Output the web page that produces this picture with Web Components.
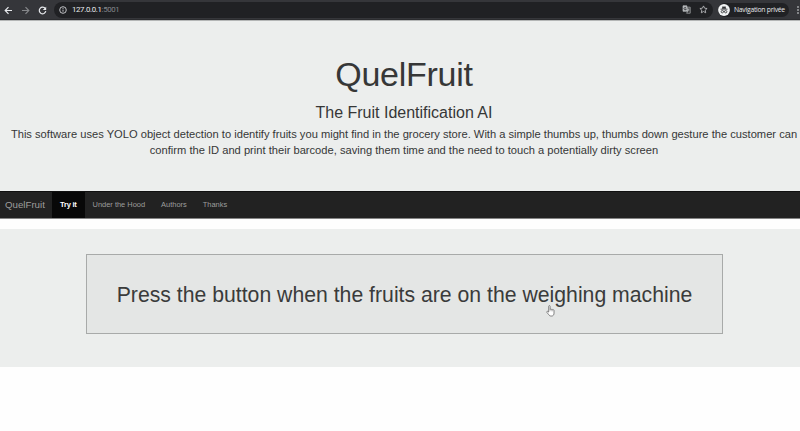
<!DOCTYPE html>
<html lang="en">
<head>
<meta charset="utf-8">
<title>QuelFruit</title>
<style>
html,body{margin:0;height:100%;overflow:hidden;background:#fefefe}
body{font-family:"Liberation Sans",Arial,sans-serif;color:#363737}
</style>
</head>
<body>
<quel-app></quel-app>
<script>
class Base extends HTMLElement{
  constructor(){super();this.attachShadow({mode:'open'}).innerHTML=this.render();}
}
customElements.define('browser-bar',class extends Base{render(){return `
<style>
:host{display:flex;align-items:center;height:20px;box-sizing:border-box;background:#35363a;border-bottom:1px solid #2c2d30;color:#e8eaed;overflow:hidden;font-size:8.3px;line-height:10px}
svg{display:block;flex:none;fill:none;stroke:currentColor}
.nav{display:flex;align-items:center;gap:8px;padding:1px 0 0 4px;width:50px;box-sizing:border-box;flex:none}
.fwd{color:#85878a}
.url{display:flex;align-items:center;flex:1;height:16px;border-radius:8px;background:#202124;margin-left:4px;padding:0 5px;box-sizing:border-box;margin-right:5px}
.addr{margin-left:5px;flex:1;font-family:Roboto,sans-serif;font-size:7.8px;letter-spacing:-.32px;white-space:nowrap}
.port{color:#85888c}
.icons{display:flex;gap:8px;align-items:center;color:#b5b7ba}
.private{display:flex;align-items:center;width:71px;height:14px;border-radius:7px;background:#202124;flex:none;font-family:"Open Sans","Noto Sans",sans-serif;font-size:6.8px;letter-spacing:-.26px;white-space:nowrap}
.private svg{margin-right:4px}
.more{margin-left:7px}
</style>
<div class="nav">
<svg width="9" height="9" viewBox="0 0 9 9" stroke-width="1.2"><path d="M8 4.5H1.3M4.5 1.2 1.2 4.5 4.5 7.8"/></svg>
<svg class="fwd" width="9" height="9" viewBox="0 0 9 9" stroke-width="1.2"><path d="M1 4.5h6.7M4.5 1.2l3.3 3.3-3.3 3.3"/></svg>
<svg width="9" height="9" viewBox="0 0 9 9" stroke-width="1.2"><path d="M7.3 2.6A3.3 3.3 0 1 0 7.8 5.2"/><path d="M8.2.7v3.4H4.8z" fill="currentColor" stroke="none"/></svg>
</div>
<div class="url">
<svg width="8" height="8" viewBox="0 0 8 8" stroke-width=".8"><circle cx="4" cy="4" r="3.3"/><path d="M4 3.6v2.1M4 2.1v.9"/></svg>
<span class="addr">127.0.0.1<span class="port">:5001</span></span>
<span class="icons">
<svg width="9" height="9" viewBox="0 0 9 9" stroke-width=".7"><path d="M1 .8h3.8L6 6.3H1z" fill="currentColor"/><path d="M5.3 2.2h2.9v6H4.5L6 6.3M5.7 4.1h2M6.8 3.5v.6c0 .9-.5 1.4-1.2 1.8M6.1 4.5l1.3 1.7"/><path d="M4.1 2.9A1.2 1.2 0 1 0 4.3 4H3.2" stroke="#202124"/></svg>
<svg width="9" height="9" viewBox="0 0 9 9" stroke-width=".9"><path d="m4.5.9 1.1 2.3 2.5.3-1.9 1.7.5 2.6-2.2-1.3-2.2 1.3.5-2.6L.9 3.5l2.5-.3z"/></svg>
</span>
</div>
<div class="private">
<svg width="12" height="12" viewBox="0 0 12 12"><circle cx="6" cy="6" r="5.9" fill="#f1f3f4" stroke="none"/><path d="m3.8 4.7.8-2.4 1.4.4 1.4-.4.8 2.4z" fill="#303134" stroke="none"/><path d="M2.5 5.2h7" stroke="#303134" stroke-width=".8"/><g stroke="#303134" stroke-width=".8"><circle cx="4.3" cy="7.7" r="1.2"/><circle cx="7.7" cy="7.7" r="1.2"/><path d="M5.4 7.3h1.2"/></g></svg>
<span>Navigation privée</span>
</div>
<svg class="more" width="4" height="10" viewBox="0 0 4 10"><g fill="currentColor" stroke="none"><circle cx="2" cy="2" r=".8"/><circle cx="2" cy="5" r=".8"/><circle cx="2" cy="8" r=".8"/></g></svg>
`}});
customElements.define('intro-banner',class extends Base{render(){return `
<style>
:host{display:block;height:171px;box-sizing:border-box;background:#eceeed;border-top:1px solid #b4b6b6;padding:34px 0 0 8px;text-align:center;white-space:nowrap}
h1,h3,p{margin:0;font-weight:400}
h1{font-size:34px;line-height:38px;letter-spacing:-.25px}
h3{font-size:16px;line-height:18px;margin-top:11px}
p{font-size:11.15px;line-height:16px;margin-top:4px}
</style>
<h1>QuelFruit</h1>
<h3>The Fruit Identification AI</h3>
<p>This software uses YOLO object detection to identify fruits you might find in the grocery store. With a simple thumbs up, thumbs down gesture the customer can<br>confirm the ID and print their barcode, saving them time and the need to touch a potentially dirty screen</p>
`}});
customElements.define('nav-item',class extends Base{render(){return `
<style>
:host{display:flex;align-items:center;justify-content:center;padding:0 8px 1px;color:#9d9d9d;font-size:7.45px}
:host([active]){background:#080808;color:#fff;font-weight:700;letter-spacing:-.2px}
</style><slot></slot>`}});
customElements.define('site-nav',class extends Base{render(){return `
<style>
:host{display:flex;height:28px;box-sizing:border-box;background:#222;border-top:1px solid #101010;border-bottom:1px solid #858585;white-space:nowrap}
.brand{width:52px;box-sizing:border-box;padding-left:5px;font-size:9.7px;color:#9d9d9d;line-height:25px}
</style>
<span class="brand">QuelFruit</span>
<nav-item active>Try it</nav-item><nav-item>Under the Hood</nav-item><nav-item>Authors</nav-item><nav-item>Thanks</nav-item>
`}});
customElements.define('hand-cursor',class extends Base{render(){return `
<style>:host{position:absolute;left:460px;top:51px}svg{display:block}</style>
<svg width="9" height="12" viewBox="0 0 9 12"><path d="M2.7 7.1V1.4c0-1.1 1.4-1.1 1.4 0v3.1c.2-.7 1.2-.6 1.3.1.3-.6 1.1-.4 1.2.2.5-.4 1.4-.1 1.4.6v2.7c0 1.6-.7 2.9-2.2 2.9H4.7c-.9 0-1.3-.5-1.8-1.2L.9 7.4c-.5-.8.4-1.4 1-.9z" fill="#fff" stroke="#555" stroke-width=".7"/><path d="M4.1 4.5v1.7M5.4 4.8v1.5M6.6 5v1.4" stroke="#777" stroke-width=".4"/></svg>`}});
customElements.define('scan-button',class extends Base{render(){return `
<style>
:host{display:block;width:637px;height:80px;position:relative}
button{width:100%;height:100%;box-sizing:border-box;border:1px solid #a8aaa9;background:#e4e6e5;color:#3a3b3b;font:21.22px/24px "Liberation Sans",Arial,sans-serif;padding:1px 0 0;white-space:nowrap}
</style>
<button><slot></slot></button><hand-cursor></hand-cursor>`}});
customElements.define('scan-panel',class extends Base{render(){return `
<style>:host{display:flex;justify-content:center;margin-top:10px;height:138px;box-sizing:border-box;padding:25px 0 0 9px;background:#eceeed}</style>
<scan-button>Press the button when the fruits are on the weighing machine</scan-button>`}});
customElements.define('quel-app',class extends Base{render(){return `
<style>:host{display:flex;flex-direction:column}</style>
<browser-bar></browser-bar><intro-banner></intro-banner><site-nav></site-nav><scan-panel></scan-panel>`}});
</script>
</body>
</html>
